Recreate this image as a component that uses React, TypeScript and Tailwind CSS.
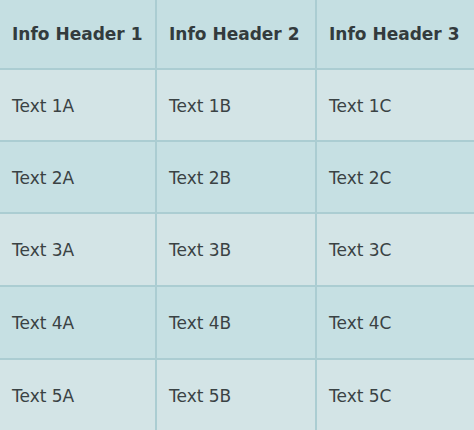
import React from 'react';

const headers = ['Info Header 1', 'Info Header 2', 'Info Header 3'];
const rows = [1, 2, 3, 4, 5].map((n) => ['A', 'B', 'C'].map((c) => `Text ${n}${c}`));

export default function App() {
  return (
    <div className="w-[474px] h-[430px] overflow-hidden bg-[#d3e4e6] text-[#3a4244] [font-family:'DejaVu_Sans',Verdana,sans-serif]">
      <div className="grid grid-cols-[157px_160px_157px] grid-rows-[70px_72px_72px_73px_73px_70px]">
        {headers.map((h, i) => (
          <div
            key={h}
            className={`flex items-center pl-3 pt-px bg-[#c5dfe2] border-b-2 border-[#abcdd2] text-[17px] font-bold text-[#333b3d] ${i < 2 ? 'border-r-2' : ''}`}
          >
            {h}
          </div>
        ))}
        {rows.map((row, r) =>
          row.map((cell, i) => (
            <div
              key={cell}
              className={`flex items-center pl-3 pt-[3px] text-[17px] border-[#abcdd2] ${r < 4 ? 'border-b-2' : ''} ${i < 2 ? 'border-r-2' : ''} ${r % 2 === 1 ? 'bg-[#c6e0e3]' : 'bg-[#d3e4e6]'}`}
            >
              {cell}
            </div>
          ))
        )}
      </div>
    </div>
  );
}
